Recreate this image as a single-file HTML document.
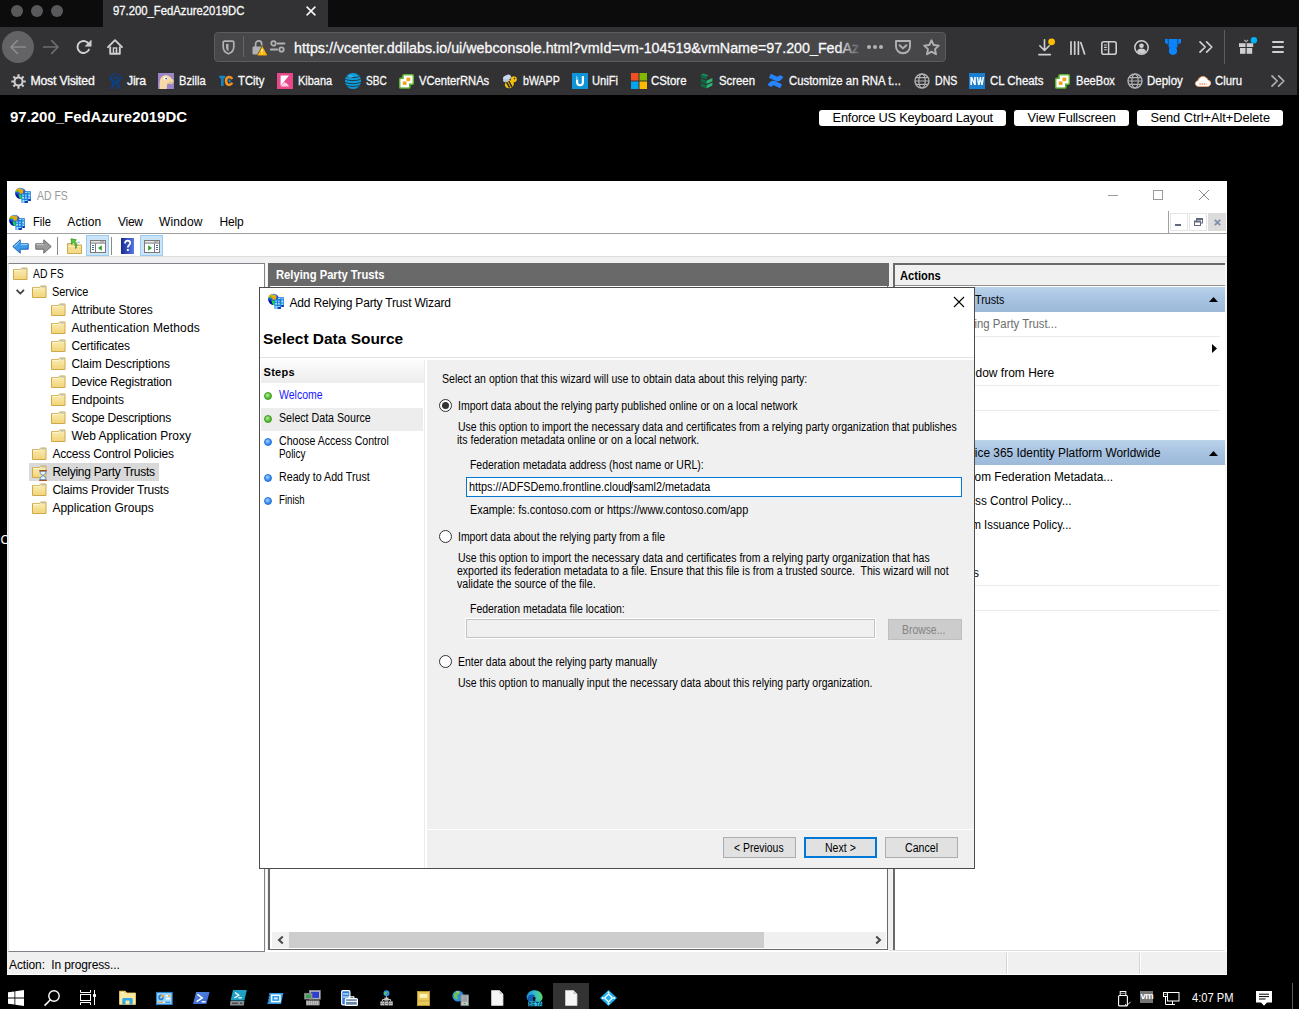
<!DOCTYPE html>
<html><head><meta charset="utf-8"><title>97.200_FedAzure2019DC</title>
<style>
*{box-sizing:border-box;margin:0;padding:0}
html,body{width:1299px;height:1009px;overflow:hidden;background:#000;font-family:"Liberation Sans",sans-serif;}
.a{position:absolute;white-space:pre}
svg.a{overflow:visible}
</style></head><body>
<div class="a" style="left:0px;top:0px;width:1299px;height:27px;background:#0c0c0d;"></div>
<div class="a" style="left:11px;top:5px;width:12px;height:12px;background:#59595b;border-radius:50%;"></div>
<div class="a" style="left:31px;top:5px;width:12px;height:12px;background:#59595b;border-radius:50%;"></div>
<div class="a" style="left:51px;top:5px;width:12px;height:12px;background:#59595b;border-radius:50%;"></div>
<div class="a" style="left:103px;top:0px;width:225px;height:27px;background:#323234;"></div>
<div class="a" style="top:4px;font-size:12px;line-height:14px;color:#f9f9fa;left:113.00px;transform:scaleX(0.9416);transform-origin:0 50%;-webkit-text-stroke:0.300px #f9f9fa;">97.200_FedAzure2019DC</div>
<svg class="a" style="left:304px;top:4px;" width="14" height="14" viewBox="0 0 14 14"><path d="M2.6 2.6l8.8 8.8M11.4 2.6l-8.8 8.8" stroke="#f9f9fa" stroke-width="1.5" fill="none"/></svg>
<div class="a" style="left:0px;top:27px;width:1299px;height:68px;background:#323234;"></div>
<div class="a" style="left:2px;top:31px;width:32px;height:32px;background:#636365;border-radius:50%;"></div>
<svg class="a" style="left:10px;top:39px;" width="16" height="16" viewBox="0 0 16 16"><path d="M15.5 8H1.2M7.3 1.6L1 8l6.3 6.4" stroke="#8c8c8e" stroke-width="1.6" fill="none" stroke-linecap="round" stroke-linejoin="round"/></svg>
<svg class="a" style="left:43px;top:39px;" width="16" height="16" viewBox="0 0 16 16"><path d="M0.5 8h14.3M8.7 1.6L15 8l-6.3 6.4" stroke="#6e6e70" stroke-width="1.6" fill="none" stroke-linecap="round" stroke-linejoin="round"/></svg>
<svg class="a" style="left:76px;top:39px;" width="16" height="16" viewBox="0 0 16 16"><path d="M12.940 5.460A6 6 0 1 0 12.940 10.540" stroke="#cfcfd2" stroke-width="1.900" fill="none" stroke-linecap="round"/><path d="M15.200 1.200V7.200H9.200Z" fill="#cfcfd2" stroke="#cfcfd2" stroke-width="0.600" stroke-linejoin="round"/></svg>
<svg class="a" style="left:107px;top:38.5px;" width="16" height="16" viewBox="0 0 16 16"><path d="M1 8.200L8 1.200l7 7" stroke="#cfcfd2" stroke-width="1.900" fill="none" stroke-linecap="round" stroke-linejoin="round"/><path d="M3.200 7.400v7.400h9.600V7.400" stroke="#cfcfd2" stroke-width="1.900" fill="none" stroke-linejoin="round"/><rect x="6.400" y="9" width="3.200" height="5.400" fill="none" stroke="#cfcfd2" stroke-width="1.400"/><rect x="8" y="11.400" width="0.900" height="0.900" fill="#cfcfd2"/></svg>
<div class="a" style="left:214px;top:32px;width:732px;height:30px;background:#474749;border:1px solid #5c5c5f;border-radius:4px;"></div>
<svg class="a" style="left:222.4px;top:39.8px;" width="13" height="15" viewBox="0 0 13 15"><path d="M2.400 1.200H10.600Q11.800 1.200 11.800 2.400V7C11.800 10.400 9.600 12.600 6.500 13.800 3.400 12.600 1.200 10.400 1.200 7V2.400Q1.200 1.200 2.400 1.200Z" stroke="#b1b1b3" stroke-width="1.700" fill="none" stroke-linejoin="round"/><path d="M6.500 3.600V11.200C5 10.400 4 9 4 7.200V4.200z" fill="#b1b1b3"/></svg>
<div class="a" style="left:243px;top:36px;width:1px;height:21px;background:#5f6670;"></div>
<svg class="a" style="left:251.5px;top:39.5px;" width="15" height="16" viewBox="0 0 15 16"><path d="M3.600 7.200V3.900a3.050 3.050 0 0 1 6.100 0V5.600" stroke="#b1b1b3" stroke-width="1.700" fill="none"/><rect x="0.500" y="6.500" width="9" height="8" rx="1.200" fill="#b1b1b3"/><path d="M10 6.400l4.600 8.600H5.400z" fill="#ffb400" stroke="#ffb400" stroke-width="0.900" stroke-linejoin="round"/><path d="M10 6.400l-4.900 9.200" stroke="#474749" stroke-width="0.800"/><rect x="9.450" y="9" width="1.100" height="3.200" fill="#fff"/><rect x="9.450" y="13" width="1.100" height="1.100" fill="#fff"/></svg>
<svg class="a" style="left:270px;top:40px;" width="15" height="13" viewBox="0 0 15 13"><circle cx="3.500" cy="3.400" r="2.200" stroke="#b1b1b3" stroke-width="1.800" fill="none"/><path d="M7.700 3.400h6.700" stroke="#b1b1b3" stroke-width="2" stroke-linecap="round"/><circle cx="11.500" cy="9.500" r="2.200" stroke="#b1b1b3" stroke-width="1.800" fill="none"/><path d="M0.800 9.500h6.300" stroke="#b1b1b3" stroke-width="2" stroke-linecap="round"/></svg>
<div class="a" style="top:39px;font-size:15.5px;line-height:17px;color:#f9f9fa;left:293.80px;transform:scaleX(0.9213);transform-origin:0 50%;-webkit-text-stroke:0.300px #f9f9fa;">https://vcenter.ddilabs.io/ui/webconsole.html?vmId=vm-104519&amp;vmName=97.200_FedAz</div>
<div class="a" style="left:838px;top:34px;width:28px;height:26px;background:linear-gradient(to right,rgba(71,71,73,0),rgba(71,71,73,1) 85%);"></div>
<div class="a" style="left:867px;top:45px;width:4px;height:4px;background:#b1b1b3;border-radius:50%;"></div>
<div class="a" style="left:873px;top:45px;width:4px;height:4px;background:#b1b1b3;border-radius:50%;"></div>
<div class="a" style="left:879px;top:45px;width:4px;height:4px;background:#b1b1b3;border-radius:50%;"></div>
<svg class="a" style="left:895px;top:40px;" width="16" height="14" viewBox="0 0 16 14"><path d="M1 1h14v5.500c0 3.800-3 6.700-7 6.700s-7-2.900-7-6.700z" stroke="#b1b1b3" stroke-width="1.900" fill="none" stroke-linejoin="round"/><path d="M4.600 5.200L8 8.400l3.400-3.200" stroke="#b1b1b3" stroke-width="1.900" fill="none" stroke-linecap="round" stroke-linejoin="round"/></svg>
<svg class="a" style="left:922.5px;top:38.5px;" width="17" height="17" viewBox="0 0 17 17"><path d="M8.500 1.300l2.200 4.700 5.100.6-3.800 3.500 1 5.100-4.500-2.600-4.500 2.600 1-5.100L1.200 6.600l5.100-.6z" stroke="#b1b1b3" stroke-width="1.900" fill="none" stroke-linejoin="round"/></svg>
<svg class="a" style="left:1038px;top:38.5px;" width="16" height="17" viewBox="0 0 16 17"><path d="M6.500 0.800v10.400M1.800 6.800l4.700 4.700 4.700-4.700" stroke="#cfcfd2" stroke-width="1.600" fill="none" stroke-linecap="round" stroke-linejoin="round"/><path d="M0.800 15.600h11.600" stroke="#cfcfd2" stroke-width="1.600" stroke-linecap="round"/><circle cx="13.600" cy="2.800" r="3.400" fill="#ffbf00"/></svg>
<svg class="a" style="left:1069.5px;top:40.5px;" width="16" height="14" viewBox="0 0 16 14"><path d="M1 0.800v12.400M4.700 0.800v12.400M8.400 0.800v12.400M10.800 1.600l3.800 11.400" stroke="#cfcfd2" stroke-width="1.700" fill="none" stroke-linecap="round"/></svg>
<svg class="a" style="left:1101px;top:40.5px;" width="16" height="14" viewBox="0 0 16 14"><rect x="0.800" y="0.800" width="14.400" height="12.400" rx="2" stroke="#cfcfd2" stroke-width="1.600" fill="none"/><path d="M7.600 1v12" stroke="#cfcfd2" stroke-width="1.500"/><path d="M3 4h2.800M3 6.400h2.800M3 8.800h2.800" stroke="#cfcfd2" stroke-width="1.100"/></svg>
<svg class="a" style="left:1133.5px;top:39.5px;" width="15" height="15" viewBox="0 0 15 15"><circle cx="7.500" cy="7.500" r="6.700" stroke="#cfcfd2" stroke-width="1.500" fill="none"/><circle cx="7.500" cy="5.800" r="2.300" fill="#cfcfd2"/><path d="M3 11.200c.8-1.900 2.600-2.600 4.500-2.600s3.700.7 4.500 2.600c-1.100 1.500-2.700 2.300-4.500 2.300S4.100 12.700 3 11.200z" fill="#cfcfd2"/></svg>
<svg class="a" style="left:1165px;top:39px;" width="17" height="16" viewBox="0 0 17 16"><path d="M0 0h2.800v5.400L0 3.800z" fill="#0a84ff"/><path d="M13.200 0H16v3.800l-2.800 1.600z" fill="#0a84ff"/><rect x="3.600" y="0" width="8.800" height="8.600" fill="#0a84ff"/><circle cx="8" cy="11.800" r="4.100" fill="#0a84ff"/></svg>
<svg class="a" style="left:1198.5px;top:41px;" width="14" height="12" viewBox="0 0 14 12"><path d="M1 0.800L6.200 6 1 11.200M7.600 0.800L12.800 6l-5.200 5.200" stroke="#cfcfd2" stroke-width="1.700" fill="none" stroke-linecap="round" stroke-linejoin="round"/></svg>
<div class="a" style="left:1224px;top:30px;width:1px;height:34px;background:#5c5c5f;"></div>
<svg class="a" style="left:1239px;top:39px;" width="16" height="16" viewBox="0 0 16 16"><rect x="0" y="4.200" width="6.500" height="3.800" fill="#cfcfd2"/><rect x="7.700" y="4.200" width="6.500" height="3.800" fill="#cfcfd2"/><rect x="1" y="9" width="5.500" height="5.800" fill="#cfcfd2"/><rect x="7.700" y="9" width="5.500" height="5.800" fill="#cfcfd2"/><path d="M7.100 3.600L5 1.800c-.4-.8.600-1.400 1.200-.8l.9.900.9-.9c.6-.6 1.600 0 1.200.8z" fill="#a9a9ab"/><circle cx="14.900" cy="1.300" r="3.200" fill="#00b3f4"/></svg>
<div class="a" style="left:1271.8px;top:41px;width:12.4px;height:2px;background:#cfcfd2;border-radius:1px;"></div>
<div class="a" style="left:1271.8px;top:46px;width:12.4px;height:2px;background:#cfcfd2;border-radius:1px;"></div>
<div class="a" style="left:1271.8px;top:51px;width:12.4px;height:2px;background:#cfcfd2;border-radius:1px;"></div>
<div class="a" style="left:1296.5px;top:27px;width:3px;height:68px;background:#0c0c0d;"></div>
<div class="a" style="top:74px;font-size:12.3px;line-height:14px;color:#f9f9fa;letter-spacing:-0.230px;left:30.50px;-webkit-text-stroke:0.300px #f9f9fa;">Most Visited</div>
<div class="a" style="top:74px;font-size:12.3px;line-height:14px;color:#f9f9fa;letter-spacing:-0.257px;left:127.00px;-webkit-text-stroke:0.300px #f9f9fa;">Jira</div>
<div class="a" style="top:74px;font-size:12.3px;line-height:14px;color:#f9f9fa;left:178.60px;transform:scaleX(0.9085);transform-origin:0 50%;-webkit-text-stroke:0.300px #f9f9fa;">Bzilla</div>
<div class="a" style="top:74px;font-size:12.3px;line-height:14px;color:#f9f9fa;left:238.30px;transform:scaleX(0.9198);transform-origin:0 50%;-webkit-text-stroke:0.300px #f9f9fa;">TCity</div>
<div class="a" style="top:74px;font-size:12.3px;line-height:14px;color:#f9f9fa;left:297.80px;transform:scaleX(0.8930);transform-origin:0 50%;-webkit-text-stroke:0.300px #f9f9fa;">Kibana</div>
<div class="a" style="top:74px;font-size:12.3px;line-height:14px;color:#f9f9fa;left:365.60px;transform:scaleX(0.8222);transform-origin:0 50%;-webkit-text-stroke:0.300px #f9f9fa;">SBC</div>
<div class="a" style="top:74px;font-size:12.3px;line-height:14px;color:#f9f9fa;left:419.40px;transform:scaleX(0.9089);transform-origin:0 50%;-webkit-text-stroke:0.300px #f9f9fa;">VCenterRNAs</div>
<div class="a" style="top:74px;font-size:12.3px;line-height:14px;color:#f9f9fa;left:522.60px;transform:scaleX(0.8637);transform-origin:0 50%;-webkit-text-stroke:0.300px #f9f9fa;">bWAPP</div>
<div class="a" style="top:74px;font-size:12.3px;line-height:14px;color:#f9f9fa;left:592.40px;transform:scaleX(0.9058);transform-origin:0 50%;-webkit-text-stroke:0.300px #f9f9fa;">UniFi</div>
<div class="a" style="top:74px;font-size:12.3px;line-height:14px;color:#f9f9fa;left:650.70px;transform:scaleX(0.9273);transform-origin:0 50%;-webkit-text-stroke:0.300px #f9f9fa;">CStore</div>
<div class="a" style="top:74px;font-size:12.3px;line-height:14px;color:#f9f9fa;left:718.80px;transform:scaleX(0.9238);transform-origin:0 50%;-webkit-text-stroke:0.300px #f9f9fa;">Screen</div>
<div class="a" style="top:74px;font-size:12.3px;line-height:14px;color:#f9f9fa;left:788.60px;transform:scaleX(0.9242);transform-origin:0 50%;-webkit-text-stroke:0.300px #f9f9fa;">Customize an RNA t...</div>
<div class="a" style="top:74px;font-size:12.3px;line-height:14px;color:#f9f9fa;left:934.70px;transform:scaleX(0.8587);transform-origin:0 50%;-webkit-text-stroke:0.300px #f9f9fa;">DNS</div>
<div class="a" style="top:74px;font-size:12.3px;line-height:14px;color:#f9f9fa;left:989.50px;transform:scaleX(0.9279);transform-origin:0 50%;-webkit-text-stroke:0.300px #f9f9fa;">CL Cheats</div>
<div class="a" style="top:74px;font-size:12.3px;line-height:14px;color:#f9f9fa;left:1075.60px;transform:scaleX(0.9030);transform-origin:0 50%;-webkit-text-stroke:0.300px #f9f9fa;">BeeBox</div>
<div class="a" style="top:74px;font-size:12.3px;line-height:14px;color:#f9f9fa;left:1146.80px;transform:scaleX(0.9352);transform-origin:0 50%;-webkit-text-stroke:0.300px #f9f9fa;">Deploy</div>
<div class="a" style="top:74px;font-size:12.3px;line-height:14px;color:#f9f9fa;left:1215.20px;transform:scaleX(0.9255);transform-origin:0 50%;-webkit-text-stroke:0.300px #f9f9fa;">Cluru</div>
<svg class="a" style="left:10.5px;top:73.5px;" width="15" height="15" viewBox="0 0 15 15"><circle cx="7.500" cy="7.500" r="4" stroke="#cfcfd2" stroke-width="2" fill="none"/><g stroke="#cfcfd2" stroke-width="2.100" stroke-linecap="butt"><path d="M7.500 0.300v2.600M7.500 12.100v2.600M0.300 7.500h2.600M12.100 7.500h2.600M2.400 2.400l1.800 1.800M10.800 10.800l1.800 1.800M2.400 12.600l1.800-1.800M10.800 4.200l1.800-1.800"/></g></svg>
<svg class="a" style="left:108.5px;top:73px;" width="13" height="16" viewBox="0 0 13 16"><g stroke="#0d3f82" stroke-width="2.700" fill="none" stroke-linecap="round"><path d="M1.600 4.200C3 8 4.600 9.400 6.500 9.400S10 8 11.400 4.200"/><path d="M2.800 14.800C3.600 11.800 5 10 6.500 9 8 10 9.400 11.800 10.200 14.800"/></g><circle cx="6.500" cy="4.600" r="1.700" fill="#0d3f82"/><circle cx="3.600" cy="1.600" r="1.100" fill="#0d3f82"/><circle cx="9.400" cy="1.600" r="1.100" fill="#0d3f82"/><circle cx="6.500" cy="0.900" r="0.900" fill="#0d3f82"/></svg>
<svg class="a" style="left:158px;top:73px;" width="16" height="16" viewBox="0 0 16 16"><rect width="16" height="16" fill="#9a86c6"/><path d="M1.600 16V11c0-3 .6-5.400 2-7C5 2.400 7.400 1.800 9.600 2.400c2 .6 3.400 2 4.400 3.600 1 .4 1.600 1.200 1.600 2.400 0 1.600-1.200 2.600-3 2.600-1.200 0-2.200-.2-3-.8-.6 1.600-1 3.600-.8 5.800z" fill="#f6d9a6"/><circle cx="7.600" cy="5.400" r="1.800" fill="#fff"/><circle cx="8.200" cy="5.600" r="0.900" fill="#4a4a6a"/><path d="M11 9.600c1.400.5 2.800.3 3.800-.5" stroke="#b9925a" stroke-width="0.600" fill="none"/></svg>
<svg class="a" style="left:219px;top:73.5px;" width="15" height="15" viewBox="0 0 15 15"><path d="M0.300 1.800h6v2.500H4.600v7.600H2V4.300H0.300z" fill="#1287c9"/><path d="M14.200 4.600c-.9-1.800-2.300-2.800-4-2.800-2.600 0-4.400 2.100-4.400 5.100s1.800 5.100 4.400 5.100c1.700 0 3.100-1 4-2.800l-2.100-1c-.4.900-1 1.400-1.800 1.400-1.100 0-1.900-1.100-1.900-2.700s.8-2.700 1.900-2.700c.8 0 1.400.5 1.800 1.400z" fill="#f7941d"/><path d="M11.600 5.400a1.600 1.600 0 1 0 0 3z" fill="#1287c9"/></svg>
<svg class="a" style="left:277px;top:73px;" width="16" height="16" viewBox="0 0 16 16"><rect width="16" height="16" fill="#e8478b"/><path d="M3.600 2.400h8.400L3.600 13z" fill="#fff"/><path d="M7.200 9.200c2.200.4 4 2 4.800 4.400H3.800z" fill="#fbd0e1"/></svg>
<svg class="a" style="left:345px;top:73px;" width="16" height="16" viewBox="0 0 16 16"><circle cx="8" cy="8" r="8" fill="#0a9edc"/><path d="M1.600 3.600c4 1.400 8.800 1.400 12.800 0M0.400 6.400c4.800 1.600 10.400 1.600 15.200 0M0.200 9.400c4.800 1.800 10.800 1.800 15.600 0M1.400 12.300c3.800 1.600 9.400 1.600 13.200 0" stroke="#2a2f3a" stroke-width="0.900" fill="none"/><ellipse cx="5.400" cy="3.600" rx="2.600" ry="1.400" fill="#4fc3f0" opacity="0.600"/></svg>
<svg class="a" style="left:398.8px;top:73.5px;" width="15" height="15" viewBox="0 0 15 15"><rect x="4" y="0.800" width="10.200" height="9.400" rx="1" fill="#fff" stroke="#5eb531" stroke-width="1.700"/><rect x="0.800" y="4.400" width="10" height="9.600" rx="1" fill="#fff" stroke="#5eb531" stroke-width="1.700"/><rect x="4.850" y="1.650" width="8.500" height="7.700" fill="#fff"/><rect x="1.650" y="5.250" width="8.300" height="7.900" fill="#fff"/><rect x="7.500" y="3.600" width="3.800" height="3.500" fill="#f7a11a"/><rect x="3.800" y="7.400" width="3.700" height="3.500" fill="#f7a11a"/></svg>
<svg class="a" style="left:502px;top:73px;" width="16" height="16" viewBox="0 0 16 16"><ellipse cx="5" cy="4.600" rx="4.200" ry="2.600" fill="#c9d7ee" transform="rotate(-20 5 4.600)"/><ellipse cx="4.400" cy="7.600" rx="3.400" ry="1.800" fill="#b7c8e6"/><ellipse cx="7.400" cy="11.200" rx="4.600" ry="3.800" fill="#f4c20d" transform="rotate(-25 7.400 11.200)"/><path d="M4.600 9.200l3 5.400M6.800 8l3 5.800" stroke="#2a2a2a" stroke-width="1.500"/><circle cx="11.800" cy="6.200" r="3" fill="#f4c20d"/><circle cx="12.600" cy="5.600" r="0.800" fill="#2a2a2a"/><path d="M11 3.400L10 1M13 3.400L14.400 1.400" stroke="#2a2a2a" stroke-width="0.700"/></svg>
<svg class="a" style="left:572px;top:73px;" width="16" height="16" viewBox="0 0 16 16"><rect width="16" height="16" fill="#0d95d8"/><path d="M4 6.400v2.800c0 2.400 1.600 4 4 4s4-1.600 4-4V3h-2.200v6.200c0 1.200-.7 2-1.800 2s-1.800-.8-1.800-2V6.400z" fill="#fff"/><rect x="4" y="3.200" width="1" height="1" fill="#bfe6f8"/><rect x="5.200" y="4.400" width="1" height="1" fill="#bfe6f8"/><rect x="4" y="4.800" width="1" height="1" fill="#bfe6f8"/></svg>
<svg class="a" style="left:631px;top:73px;" width="16" height="16" viewBox="0 0 16 16"><rect width="7.500" height="7.500" fill="#f25022"/><rect x="8.500" width="7.500" height="7.500" fill="#7fba00"/><rect y="8.500" width="7.500" height="7.500" fill="#00a4ef"/><rect x="8.500" y="8.500" width="7.500" height="7.500" fill="#ffb900"/></svg>
<svg class="a" style="left:700px;top:73px;" width="14" height="16" viewBox="0 0 14 16"><path d="M1 1.400l5.600 2v3.200L1 4.600zM1 5.800l5.600 2V11L1 9zM1 10.200l5.600 2v3.200L1 13.400z" fill="#0f6b45"/><path d="M6.600 7.800L12.400 5v3.200L6.600 11zM6.600 12.200l5.800-2.800v3.200l-5.800 2.800z" fill="#2bb673"/><path d="M1 1.400L3.400 0.400 9 2.400 6.600 3.400z" fill="#1a8f5c"/></svg>
<svg class="a" style="left:767px;top:73px;" width="17" height="16" viewBox="0 0 17 16"><path d="M0.600 12c2.600-4.400 5.400-5 9.200-3.200l5.200 2.500-1.900 4-5.200-2.500c-1.700-.8-2.600-.5-3.700 1.300z" fill="#2684ff"/><path d="M16.400 4c-2.600 4.400-5.400 5-9.200 3.200L2 4.700l1.900-4 5.200 2.500c1.700.8 2.600.5 3.700-1.300z" fill="#2684ff"/></svg>
<svg class="a" style="left:914px;top:73px;" width="16" height="16" viewBox="0 0 16 16"><circle cx="8" cy="8" r="7" stroke="#b1b1b3" stroke-width="1.400" fill="none"/><ellipse cx="8" cy="8" rx="3.200" ry="7" stroke="#b1b1b3" stroke-width="1.200" fill="none"/><path d="M1 8h14M2 4.600h12M2 11.400h12" stroke="#b1b1b3" stroke-width="1.200" fill="none"/></svg>
<svg class="a" style="left:969px;top:73px;" width="16" height="16" viewBox="0 0 16 16"><rect width="16" height="16" fill="#1b7fd1"/><path d="M1.400 12V4h1.800l2 4.600V4h1.600v8H5.200L3 7.200V12zM7.600 4h1.500l.8 5 .8-5h1.300l.8 5 .8-5h1.500l-1.400 8h-1.600l-.7-4.400-.7 4.400H9z" fill="#fff"/></svg>
<svg class="a" style="left:1055.2px;top:73.5px;" width="15" height="15" viewBox="0 0 15 15"><rect x="4" y="0.800" width="10.200" height="9.400" rx="1" fill="#fff" stroke="#5eb531" stroke-width="1.700"/><rect x="0.800" y="4.400" width="10" height="9.600" rx="1" fill="#fff" stroke="#5eb531" stroke-width="1.700"/><rect x="4.850" y="1.650" width="8.500" height="7.700" fill="#fff"/><rect x="1.650" y="5.250" width="8.300" height="7.900" fill="#fff"/><rect x="7.500" y="3.600" width="3.800" height="3.500" fill="#f7a11a"/><rect x="3.800" y="7.400" width="3.700" height="3.500" fill="#f7a11a"/></svg>
<svg class="a" style="left:1127px;top:73px;" width="16" height="16" viewBox="0 0 16 16"><circle cx="8" cy="8" r="7" stroke="#b1b1b3" stroke-width="1.400" fill="none"/><ellipse cx="8" cy="8" rx="3.200" ry="7" stroke="#b1b1b3" stroke-width="1.200" fill="none"/><path d="M1 8h14M2 4.600h12M2 11.400h12" stroke="#b1b1b3" stroke-width="1.200" fill="none"/></svg>
<svg class="a" style="left:1195px;top:76px;" width="16" height="11" viewBox="0 0 16 11"><path d="M3.600 10.400C1.600 10.400.4 9.200.4 7.600c0-1.500 1-2.600 2.500-2.800C3.400 2.400 5.400.6 8 .6c2.300 0 4.200 1.400 4.800 3.500 1.700.2 2.900 1.500 2.900 3.100 0 1.800-1.400 3.200-3.300 3.200z" fill="#fff" stroke="#f6a97c" stroke-width="0.900"/><path d="M4.400 8h7.200" stroke="#f08a5d" stroke-width="1.400" stroke-dasharray="1.400 0.800"/></svg>
<svg class="a" style="left:1270.5px;top:75px;" width="14" height="12" viewBox="0 0 14 12"><path d="M1 0.800L6.200 6 1 11.200M7.600 0.800L12.800 6l-5.200 5.200" stroke="#b1b1b3" stroke-width="1.700" fill="none" stroke-linecap="round" stroke-linejoin="round"/></svg>
<div class="a" style="top:108px;font-size:15px;line-height:17px;color:#fff;font-weight:700;letter-spacing:-0.029px;left:10.00px;">97.200_FedAzure2019DC</div>
<div class="a" style="left:819px;top:110px;width:187.29999999999995px;height:16px;background:#fff;border-radius:3px;"></div>
<div class="a" style="top:110px;font-size:12.8px;line-height:15px;color:#000;letter-spacing:-0.210px;left:832.60px;">Enforce US Keyboard Layout</div>
<div class="a" style="left:1014px;top:110px;width:115px;height:16px;background:#fff;border-radius:3px;"></div>
<div class="a" style="top:110px;font-size:12.8px;line-height:15px;color:#000;letter-spacing:-0.133px;left:1027.60px;">View Fullscreen</div>
<div class="a" style="left:1137px;top:110px;width:146px;height:16px;background:#fff;border-radius:3px;"></div>
<div class="a" style="top:110px;font-size:12.8px;line-height:15px;color:#000;letter-spacing:-0.031px;left:1150.40px;">Send Ctrl+Alt+Delete</div>
<div class="a" style="left:0;top:530px;width:7px;height:20px;overflow:hidden"><div class="a" style="left:0.500px;top:3px;font-size:12.500px;line-height:14px;color:#fff">C</div></div>
<div class="a" style="left:7px;top:181px;width:1220px;height:794px;background:#fff;"></div>
<svg class="a" style="left:14.6px;top:186.8px;" width="16.3" height="16.3" viewBox="0 0 17 17"><circle cx="5.800" cy="6.600" r="5.800" fill="#1a4fd0"/><path d="M2.200 2.400C3.600 1 5.600 0.600 7.600 1.200L9 3.600 6 6.400 2 5.200z" fill="#4aa8f0"/><path d="M0.300 5.400C0.600 3.400 2 1.800 3.800 1.400L7.200 2.800 8.600 1.800V7H4.200L5.600 5.600 2.400 4.400z" fill="#f7a800"/><path d="M2 3.600c.8-.4 1.800 0 2 .8.200.8-.6 1.200-1.400 1.200S1.600 4.400 2 3.600zM3.600 8.200c1.400-.6 3.400-.2 4 1.200.6 1.600-.2 3-1.600 3.400C4.800 12 3.600 10.200 3.600 8.200z" fill="#18d840"/><path d="M0.600 7.800C1.400 10 2.800 11.800 5 12.600L4 9.400 2.200 7.200z" fill="#0a10a8"/><rect x="9.500" y="4.400" width="7" height="10" fill="#1a78d8"/><rect x="6.700" y="6.800" width="6.900" height="9.700" fill="#1a80e0"/><g fill="#bfeeff"><rect x="10.600" y="5.400" width="2.400" height="0.900"/><rect x="13.800" y="5.600" width="1.800" height="1"/><rect x="14" y="7.800" width="1.600" height="2.200"/><rect x="13.800" y="11" width="1.800" height="1.400"/><rect x="7.600" y="8" width="1.800" height="1"/><rect x="10.400" y="8" width="1.800" height="1"/><rect x="7.600" y="10.200" width="1.600" height="2"/><rect x="10.600" y="10.200" width="1.400" height="2"/><rect x="7.800" y="13.400" width="1.400" height="3"/><rect x="9.800" y="13.800" width="2.800" height="1"/></g><rect x="10.600" y="14.800" width="2.600" height="1.700" fill="#0020a0"/><rect x="14.200" y="12.800" width="2.200" height="1.600" fill="#0020a0"/></svg>
<div class="a" style="top:189px;font-size:12px;line-height:14px;color:#999;left:36.60px;transform:scaleX(0.8686);transform-origin:0 50%;">AD FS</div>
<div class="a" style="left:1108px;top:195px;width:10px;height:1px;background:#9a9a9a;"></div>
<div class="a" style="left:1153px;top:190px;width:10px;height:10px;border:1px solid #9a9a9a;"></div>
<svg class="a" style="left:1198.5px;top:190px;" width="10" height="10" viewBox="0 0 10 10"><path d="M0 0l10 10M10 0L0 10" stroke="#8a8a8a" stroke-width="1" fill="none"/></svg>
<svg class="a" style="left:8.9px;top:213.6px;" width="16.3" height="16.3" viewBox="0 0 17 17"><circle cx="5.800" cy="6.600" r="5.800" fill="#1a4fd0"/><path d="M2.200 2.400C3.600 1 5.600 0.600 7.600 1.200L9 3.600 6 6.400 2 5.200z" fill="#4aa8f0"/><path d="M0.300 5.400C0.600 3.400 2 1.800 3.800 1.400L7.200 2.800 8.600 1.800V7H4.200L5.600 5.600 2.400 4.400z" fill="#f7a800"/><path d="M2 3.600c.8-.4 1.800 0 2 .8.200.8-.6 1.200-1.400 1.200S1.600 4.400 2 3.600zM3.600 8.200c1.400-.6 3.400-.2 4 1.200.6 1.600-.2 3-1.600 3.400C4.800 12 3.600 10.200 3.600 8.200z" fill="#18d840"/><path d="M0.600 7.800C1.400 10 2.800 11.800 5 12.600L4 9.400 2.200 7.200z" fill="#0a10a8"/><rect x="9.500" y="4.400" width="7" height="10" fill="#1a78d8"/><rect x="6.700" y="6.800" width="6.900" height="9.700" fill="#1a80e0"/><g fill="#bfeeff"><rect x="10.600" y="5.400" width="2.400" height="0.900"/><rect x="13.800" y="5.600" width="1.800" height="1"/><rect x="14" y="7.800" width="1.600" height="2.200"/><rect x="13.800" y="11" width="1.800" height="1.400"/><rect x="7.600" y="8" width="1.800" height="1"/><rect x="10.400" y="8" width="1.800" height="1"/><rect x="7.600" y="10.200" width="1.600" height="2"/><rect x="10.600" y="10.200" width="1.400" height="2"/><rect x="7.800" y="13.400" width="1.400" height="3"/><rect x="9.800" y="13.800" width="2.800" height="1"/></g><rect x="10.600" y="14.800" width="2.600" height="1.700" fill="#0020a0"/><rect x="14.200" y="12.800" width="2.200" height="1.600" fill="#0020a0"/></svg>
<div class="a" style="top:215px;font-size:12px;line-height:14px;color:#000;left:33.40px;transform:scaleX(0.9254);transform-origin:0 50%;">File</div>
<div class="a" style="top:215px;font-size:12px;line-height:14px;color:#000;letter-spacing:0.107px;left:67.30px;">Action</div>
<div class="a" style="top:215px;font-size:12px;line-height:14px;color:#000;letter-spacing:-0.299px;left:118.10px;">View</div>
<div class="a" style="top:215px;font-size:12px;line-height:14px;color:#000;letter-spacing:0.152px;left:159.00px;">Window</div>
<div class="a" style="top:215px;font-size:12px;line-height:14px;color:#000;letter-spacing:-0.122px;left:219.40px;">Help</div>
<div class="a" style="left:7px;top:233px;width:1162px;height:1px;background:#a0a0a0;"></div>
<div class="a" style="left:1168px;top:211px;width:1px;height:23px;background:#a0a0a0;"></div>
<div class="a" style="left:1169px;top:211px;width:58px;height:1px;background:#fff;"></div>
<div class="a" style="left:1169px;top:233px;width:58px;height:1px;background:#a0a0a0;"></div>
<div class="a" style="left:1170px;top:213px;width:18px;height:18px;background:#fff;border:1px solid #e5e5e5;"></div>
<div class="a" style="left:1175px;top:224px;width:6px;height:2px;background:#5f6b7c;"></div>
<div class="a" style="left:1189px;top:213px;width:18px;height:18px;background:#fff;border:1px solid #e5e5e5;"></div>
<svg class="a" style="left:1194px;top:218px;" width="9" height="8" viewBox="0 0 9 8"><rect x="2.500" y="0.500" width="6" height="4.500" fill="none" stroke="#5f6b7c"/><rect x="2.500" y="0.500" width="6" height="1.500" fill="#5f6b7c"/><rect x="0.500" y="3" width="6" height="4.500" fill="#fff" stroke="#5f6b7c"/><rect x="0.500" y="3" width="6" height="1.500" fill="#5f6b7c"/></svg>
<div class="a" style="left:1208px;top:213px;width:18px;height:18px;background:#dcdcdc;"></div>
<svg class="a" style="left:1213.5px;top:219px;" width="7" height="7" viewBox="0 0 7 7"><path d="M0.800 0.800l5.400 5.400M6.200 0.800L0.800 6.200" stroke="#7f90a8" stroke-width="1.900" fill="none"/></svg>
<div class="a" style="left:7px;top:234px;width:1220px;height:23px;background:#fff;"></div>
<svg class="a" style="left:11.5px;top:238.5px;" width="17" height="15" viewBox="0 0 17 15"><path d="M8.200 0.800L0.800 7.500l7.400 6.700V10.200h8V4.800h-8z" fill="#3b9bea" stroke="#1b62b3" stroke-width="1" stroke-linejoin="round"/><path d="M8 2.400L2.400 7.500M8.600 5.600h7" stroke="#9fd4ff" stroke-width="1" fill="none"/></svg>
<svg class="a" style="left:34.5px;top:238.5px;" width="17" height="15" viewBox="0 0 17 15"><path d="M8.800 0.800l7.400 6.700-7.400 6.700V10.200h-8V4.800h8z" fill="#9a9a9a" stroke="#6a6a6a" stroke-width="1" stroke-linejoin="round"/><path d="M1.400 5.600h7.400" stroke="#c8c8c8" stroke-width="1"/></svg>
<div class="a" style="left:57px;top:237px;width:1px;height:18px;background:#8a8a8a;"></div>
<svg class="a" style="left:66.5px;top:238px;" width="16" height="16" viewBox="0 0 16 16"><path d="M0.500 5.500h4.500l1.500 1.500h8v8.500h-14z" fill="#f5dc8c" stroke="#c9a850" stroke-width="1"/><path d="M1.200 8.500h12.600" stroke="#fdf1c0" stroke-width="1"/><path d="M10.500 4.200h2.500" stroke="#7ab0e8" stroke-width="1"/><path d="M8.600 10.600C8.800 7.400 8 5.600 6.200 4.600L4.600 6.400 4 0.800l5.400 1L7.800 3.400C10 4.600 10.800 7.200 8.600 10.600z" fill="#5ac83c" stroke="#2f8a1c" stroke-width="0.700" stroke-linejoin="round"/></svg>
<div class="a" style="left:86px;top:235px;width:23px;height:21px;background:#cce4f7;border:1px solid #99ccf0;"></div>
<svg class="a" style="left:89.5px;top:239.5px;" width="16" height="13" viewBox="0 0 16 13"><rect x="0.500" y="0.500" width="15" height="12" fill="#fff" stroke="#7a7a7a"/><rect x="0.500" y="0.500" width="15" height="2.600" fill="#e6e6e6" stroke="#7a7a7a"/><path d="M10.500 1.800h1M12.500 1.800h1" stroke="#555" stroke-width="1"/><path d="M5.500 3.500v9" stroke="#7a7a7a"/><path d="M2 5.500h2M2 7.500h2M2 9.500h2" stroke="#3a6ea5"/><path d="M11.800 5.200v5.600L8 8z" fill="#2e9c2e"/></svg>
<div class="a" style="left:111px;top:237px;width:1px;height:18px;background:#8a8a8a;"></div>
<svg class="a" style="left:121px;top:238px;" width="13" height="16" viewBox="0 0 13 16"><defs><linearGradient id="hg" x1="0" y1="0" x2="1" y2="0"><stop offset="0" stop-color="#1c2c8c"/><stop offset="0.600" stop-color="#3a55c8"/><stop offset="1" stop-color="#5b7be0"/></linearGradient></defs><rect x="0" y="0" width="13" height="16" fill="url(#hg)"/><path d="M4 5.400c0-1.800 1-2.800 2.600-2.800s2.600 1 2.600 2.400c0 2-2.400 2.200-2.400 4.400" stroke="#fff" stroke-width="1.700" fill="none"/><rect x="5.900" y="11" width="1.900" height="1.900" fill="#fff"/></svg>
<div class="a" style="left:140px;top:235px;width:23px;height:21px;background:#cce4f7;border:1px solid #99ccf0;"></div>
<svg class="a" style="left:143.5px;top:239.5px;" width="16" height="13" viewBox="0 0 16 13"><rect x="0.500" y="0.500" width="15" height="12" fill="#fff" stroke="#7a7a7a"/><rect x="0.500" y="0.500" width="15" height="2.600" fill="#e6e6e6" stroke="#7a7a7a"/><path d="M10.500 1.800h1M12.500 1.800h1" stroke="#555" stroke-width="1"/><path d="M10.500 3.500v9" stroke="#7a7a7a"/><path d="M12 5.500h2M12 7.500h2M12 9.500h2" stroke="#3a6ea5"/><path d="M4.200 5.200v5.600L8 8z" fill="#2e9c2e"/></svg>
<div class="a" style="left:7px;top:256px;width:1220px;height:1px;background:#dcdcdc;"></div>
<div class="a" style="left:7px;top:257px;width:1220px;height:718px;background:#f0f0f0;"></div>
<svg class="a" width="0" height="0" style="left:0;top:0"><defs><linearGradient id="fg" x1="0" y1="0" x2="0" y2="1"><stop offset="0" stop-color="#fbeeb8"/><stop offset="1" stop-color="#f2d478"/></linearGradient></defs></svg>
<div class="a" style="left:8px;top:263px;width:257px;height:689px;background:#fff;border:1px solid #7f8288;border-left-color:#e4e4e4;"></div>
<svg class="a" style="left:12.8px;top:267.0px;" width="15" height="13" viewBox="0 0 15 13"><path d="M0.500 2.500v10h13.500v-11.500h-5.400l-1.200 1.500z" fill="url(#fg)" stroke="#cfa84c" stroke-width="1" stroke-linejoin="round"/><path d="M1.200 3.300h6.200" stroke="#fff8dc" stroke-width="1"/><path d="M9.800 2h2.800" stroke="#8fb8e8" stroke-width="1"/></svg>
<div class="a" style="top:267px;font-size:12px;line-height:14px;color:#000;left:33.40px;transform:scaleX(0.8658);transform-origin:0 50%;">AD FS</div>
<svg class="a" style="left:31.8px;top:285.0px;" width="15" height="13" viewBox="0 0 15 13"><path d="M0.500 2.500v10h13.500v-11.500h-5.400l-1.200 1.500z" fill="url(#fg)" stroke="#cfa84c" stroke-width="1" stroke-linejoin="round"/><path d="M1.200 3.300h6.200" stroke="#fff8dc" stroke-width="1"/><path d="M9.800 2h2.800" stroke="#8fb8e8" stroke-width="1"/></svg>
<div class="a" style="top:285px;font-size:12px;line-height:14px;color:#000;left:52.40px;transform:scaleX(0.9096);transform-origin:0 50%;">Service</div>
<svg class="a" style="left:15.5px;top:289.0px;" width="9" height="6" viewBox="0 0 9 6"><path d="M0.600 0.800L4.300 4.600 8 0.800" stroke="#3c3c3c" stroke-width="1.700" fill="none"/></svg>
<svg class="a" style="left:50.8px;top:303.0px;" width="15" height="13" viewBox="0 0 15 13"><path d="M0.500 2.500v10h13.500v-11.500h-5.400l-1.200 1.500z" fill="url(#fg)" stroke="#cfa84c" stroke-width="1" stroke-linejoin="round"/><path d="M1.200 3.300h6.200" stroke="#fff8dc" stroke-width="1"/><path d="M9.800 2h2.800" stroke="#8fb8e8" stroke-width="1"/></svg>
<div class="a" style="top:303px;font-size:12px;line-height:14px;color:#000;letter-spacing:-0.089px;left:71.40px;">Attribute Stores</div>
<svg class="a" style="left:50.8px;top:321.0px;" width="15" height="13" viewBox="0 0 15 13"><path d="M0.500 2.500v10h13.500v-11.500h-5.400l-1.200 1.500z" fill="url(#fg)" stroke="#cfa84c" stroke-width="1" stroke-linejoin="round"/><path d="M1.200 3.300h6.200" stroke="#fff8dc" stroke-width="1"/><path d="M9.800 2h2.800" stroke="#8fb8e8" stroke-width="1"/></svg>
<div class="a" style="top:321px;font-size:12px;line-height:14px;color:#000;letter-spacing:0.140px;left:71.40px;">Authentication Methods</div>
<svg class="a" style="left:50.8px;top:339.0px;" width="15" height="13" viewBox="0 0 15 13"><path d="M0.500 2.500v10h13.500v-11.500h-5.400l-1.200 1.500z" fill="url(#fg)" stroke="#cfa84c" stroke-width="1" stroke-linejoin="round"/><path d="M1.200 3.300h6.200" stroke="#fff8dc" stroke-width="1"/><path d="M9.800 2h2.800" stroke="#8fb8e8" stroke-width="1"/></svg>
<div class="a" style="top:339px;font-size:12px;line-height:14px;color:#000;letter-spacing:-0.128px;left:71.40px;">Certificates</div>
<svg class="a" style="left:50.8px;top:357.0px;" width="15" height="13" viewBox="0 0 15 13"><path d="M0.500 2.500v10h13.500v-11.500h-5.400l-1.200 1.500z" fill="url(#fg)" stroke="#cfa84c" stroke-width="1" stroke-linejoin="round"/><path d="M1.200 3.300h6.200" stroke="#fff8dc" stroke-width="1"/><path d="M9.800 2h2.800" stroke="#8fb8e8" stroke-width="1"/></svg>
<div class="a" style="top:357px;font-size:12px;line-height:14px;color:#000;letter-spacing:-0.085px;left:71.40px;">Claim Descriptions</div>
<svg class="a" style="left:50.8px;top:375.0px;" width="15" height="13" viewBox="0 0 15 13"><path d="M0.500 2.500v10h13.500v-11.500h-5.400l-1.200 1.500z" fill="url(#fg)" stroke="#cfa84c" stroke-width="1" stroke-linejoin="round"/><path d="M1.200 3.300h6.200" stroke="#fff8dc" stroke-width="1"/><path d="M9.800 2h2.800" stroke="#8fb8e8" stroke-width="1"/></svg>
<div class="a" style="top:375px;font-size:12px;line-height:14px;color:#000;letter-spacing:-0.197px;left:71.40px;">Device Registration</div>
<svg class="a" style="left:50.8px;top:393.0px;" width="15" height="13" viewBox="0 0 15 13"><path d="M0.500 2.500v10h13.500v-11.500h-5.400l-1.200 1.500z" fill="url(#fg)" stroke="#cfa84c" stroke-width="1" stroke-linejoin="round"/><path d="M1.200 3.300h6.200" stroke="#fff8dc" stroke-width="1"/><path d="M9.800 2h2.800" stroke="#8fb8e8" stroke-width="1"/></svg>
<div class="a" style="top:393px;font-size:12px;line-height:14px;color:#000;letter-spacing:-0.108px;left:71.40px;">Endpoints</div>
<svg class="a" style="left:50.8px;top:411.0px;" width="15" height="13" viewBox="0 0 15 13"><path d="M0.500 2.500v10h13.500v-11.500h-5.400l-1.200 1.500z" fill="url(#fg)" stroke="#cfa84c" stroke-width="1" stroke-linejoin="round"/><path d="M1.200 3.300h6.200" stroke="#fff8dc" stroke-width="1"/><path d="M9.800 2h2.800" stroke="#8fb8e8" stroke-width="1"/></svg>
<div class="a" style="top:411px;font-size:12px;line-height:14px;color:#000;letter-spacing:-0.211px;left:71.40px;">Scope Descriptions</div>
<svg class="a" style="left:50.8px;top:429.0px;" width="15" height="13" viewBox="0 0 15 13"><path d="M0.500 2.500v10h13.500v-11.500h-5.400l-1.200 1.500z" fill="url(#fg)" stroke="#cfa84c" stroke-width="1" stroke-linejoin="round"/><path d="M1.200 3.300h6.200" stroke="#fff8dc" stroke-width="1"/><path d="M9.800 2h2.800" stroke="#8fb8e8" stroke-width="1"/></svg>
<div class="a" style="top:429px;font-size:12px;line-height:14px;color:#000;letter-spacing:-0.016px;left:71.40px;">Web Application Proxy</div>
<svg class="a" style="left:31.8px;top:447.0px;" width="15" height="13" viewBox="0 0 15 13"><path d="M0.500 2.500v10h13.500v-11.500h-5.400l-1.200 1.500z" fill="url(#fg)" stroke="#cfa84c" stroke-width="1" stroke-linejoin="round"/><path d="M1.200 3.300h6.200" stroke="#fff8dc" stroke-width="1"/><path d="M9.800 2h2.800" stroke="#8fb8e8" stroke-width="1"/></svg>
<div class="a" style="top:447px;font-size:12px;line-height:14px;color:#000;letter-spacing:-0.174px;left:52.40px;">Access Control Policies</div>
<div class="a" style="left:29px;top:463px;width:130px;height:18px;background:#d9d9d9;"></div>
<svg class="a" style="left:31.8px;top:465.0px;" width="15" height="13" viewBox="0 0 15 13"><path d="M0.500 2.500v10h13.500v-11.500h-5.400l-1.200 1.500z" fill="url(#fg)" stroke="#cfa84c" stroke-width="1" stroke-linejoin="round"/><path d="M1.200 3.300h6.200" stroke="#fff8dc" stroke-width="1"/><path d="M9.800 2h2.800" stroke="#8fb8e8" stroke-width="1"/></svg>
<div class="a" style="top:465px;font-size:12px;line-height:14px;color:#000;letter-spacing:-0.244px;left:52.40px;">Relying Party Trusts</div>
<svg class="a" style="left:31.8px;top:483.0px;" width="15" height="13" viewBox="0 0 15 13"><path d="M0.500 2.500v10h13.500v-11.500h-5.400l-1.200 1.500z" fill="url(#fg)" stroke="#cfa84c" stroke-width="1" stroke-linejoin="round"/><path d="M1.200 3.300h6.200" stroke="#fff8dc" stroke-width="1"/><path d="M9.800 2h2.800" stroke="#8fb8e8" stroke-width="1"/></svg>
<div class="a" style="top:483px;font-size:12px;line-height:14px;color:#000;letter-spacing:-0.196px;left:52.40px;">Claims Provider Trusts</div>
<svg class="a" style="left:31.8px;top:501.0px;" width="15" height="13" viewBox="0 0 15 13"><path d="M0.500 2.500v10h13.500v-11.500h-5.400l-1.200 1.500z" fill="url(#fg)" stroke="#cfa84c" stroke-width="1" stroke-linejoin="round"/><path d="M1.200 3.300h6.200" stroke="#fff8dc" stroke-width="1"/><path d="M9.800 2h2.800" stroke="#8fb8e8" stroke-width="1"/></svg>
<div class="a" style="top:501px;font-size:12px;line-height:14px;color:#000;left:52.40px;">Application Groups</div>
<svg class="a" style="left:39px;top:469.5px;" width="8" height="11" viewBox="0 0 8 11"><path d="M1 1.200c0 2.400 1.400 3.200 3 4.300C5.600 4.400 7 3.600 7 1.200zM1 9.800c0-2.400 1.400-3.200 3-4.300 1.600 1.100 3 1.900 3 4.300z" fill="#eaf4ff" stroke="#3f7fd0" stroke-width="0.900"/><path d="M0.200 0.700h7.600M0.200 10.300h7.600" stroke="#a8541c" stroke-width="1.300"/></svg>
<div class="a" style="left:266px;top:263px;width:1px;height:688px;background:#fff;"></div>
<div class="a" style="left:268px;top:263px;width:620px;height:687px;background:#fff;border-left:2px solid #696969;border-bottom:1px solid #696969;border-right:1px solid #696969;"></div>
<div class="a" style="left:268px;top:263px;width:621px;height:23px;background:#696969;"></div>
<div class="a" style="top:268px;font-size:12px;line-height:14px;color:#fff;font-weight:700;left:275.50px;transform:scaleX(0.9350);transform-origin:0 50%;">Relying Party Trusts</div>
<div class="a" style="left:272px;top:932px;width:614px;height:16px;background:#f0f0f0;"></div>
<div class="a" style="left:289px;top:932px;width:475px;height:16px;background:#cdcdcd;"></div>
<svg class="a" style="left:276.5px;top:935.5px;" width="7" height="8" viewBox="0 0 7 8"><path d="M5.800 0.600L2 4l3.800 3.400" stroke="#484848" stroke-width="2" fill="none"/></svg>
<svg class="a" style="left:874.5px;top:935.5px;" width="7" height="8" viewBox="0 0 7 8"><path d="M1.200 0.600L5 4 1.200 7.400" stroke="#484848" stroke-width="2" fill="none"/></svg>
<div class="a" style="left:893px;top:263px;width:332px;height:687px;background:#fff;border-left:2px solid #696969;border-top:2px solid #696969;"></div>
<div class="a" style="left:1225px;top:263px;width:2px;height:688px;background:#f7f7f7;"></div>
<div class="a" style="left:895px;top:265px;width:330px;height:21px;background:#f0f0f0;"></div>
<div class="a" style="left:895px;top:285px;width:330px;height:1px;background:#909090;"></div>
<div class="a" style="top:269px;font-size:12px;line-height:14px;color:#000;font-weight:700;left:900.20px;transform:scaleX(0.9247);transform-origin:0 50%;">Actions</div>
<div class="a" style="left:896px;top:287px;width:329px;height:25px;background:linear-gradient(#bad2ea,#a9c4e2 45%,#9db9d9);"></div>
<div class="a" style="top:293px;font-size:12px;line-height:14px;color:#000;right:294.40px;transform:scaleX(0.8900);transform-origin:100% 50%;">Relying Party Trusts</div>
<svg class="a" style="left:1209px;top:297px;" width="9" height="5" viewBox="0 0 9 5"><path d="M0 5L4.500 0 9 5z" fill="#000"/></svg>
<div class="a" style="top:317px;font-size:12px;line-height:14px;color:#6d6d6d;right:241.60px;transform:scaleX(0.9450);transform-origin:100% 50%;">Add Relying Party Trust...</div>
<div class="a" style="left:975px;top:336px;width:245px;height:1px;background:#eaeaea;"></div>
<svg class="a" style="left:1212px;top:344px;" width="5" height="9" viewBox="0 0 5 9"><path d="M0 0l5 4.500L0 9z" fill="#000"/></svg>
<div class="a" style="top:366px;font-size:12px;line-height:14px;color:#000;right:244.80px;">New Window from Here</div>
<div class="a" style="left:975px;top:385px;width:245px;height:1px;background:#eaeaea;"></div>
<div class="a" style="left:975px;top:410px;width:245px;height:1px;background:#eaeaea;"></div>
<div class="a" style="left:896px;top:440px;width:329px;height:25px;background:linear-gradient(#bad2ea,#a9c4e2 45%,#9db9d9);"></div>
<div class="a" style="top:446px;font-size:12px;line-height:14px;color:#000;right:138.10px;transform:scaleX(0.9890);transform-origin:100% 50%;">Microsoft Office 365 Identity Platform Worldwide</div>
<svg class="a" style="left:1209px;top:450.5px;" width="9" height="5" viewBox="0 0 9 5"><path d="M0 5L4.500 0 9 5z" fill="#000"/></svg>
<div class="a" style="top:470px;font-size:12px;line-height:14px;color:#000;right:185.50px;transform:scaleX(0.9840);transform-origin:100% 50%;">Update from Federation Metadata...</div>
<div class="a" style="top:494px;font-size:12px;line-height:14px;color:#000;right:227.30px;transform:scaleX(0.9800);transform-origin:100% 50%;">Edit Access Control Policy...</div>
<div class="a" style="top:518px;font-size:12px;line-height:14px;color:#000;right:227.30px;transform:scaleX(0.9450);transform-origin:100% 50%;">Edit Claim Issuance Policy...</div>
<div class="a" style="top:566px;font-size:12px;line-height:14px;color:#000;right:320.00px;">Properties</div>
<div class="a" style="left:975px;top:585px;width:245px;height:1px;background:#eaeaea;"></div>
<div class="a" style="left:975px;top:610px;width:245px;height:1px;background:#eaeaea;"></div>
<div class="a" style="left:265px;top:950px;width:962px;height:2px;background:#fff;"></div>
<div class="a" style="left:889px;top:950px;width:336px;height:1px;background:#dedede;"></div>
<div class="a" style="left:1225px;top:952px;width:2px;height:22px;background:#fafafa;"></div>
<div class="a" style="left:7px;top:952px;width:1220px;height:22px;background:#f0f0f0;"></div>
<div class="a" style="left:7px;top:974px;width:1220px;height:1px;background:#fff;"></div>
<div class="a" style="top:958px;font-size:12px;line-height:14px;color:#000;letter-spacing:-0.121px;left:9.00px;">Action:  In progress...</div>
<div class="a" style="left:1006px;top:953px;width:1px;height:21px;background:#d4d4d4;"></div>
<div class="a" style="left:1007px;top:953px;width:1px;height:21px;background:#fff;"></div>
<div class="a" style="left:1139px;top:953px;width:1px;height:21px;background:#d4d4d4;"></div>
<div class="a" style="left:1140px;top:953px;width:1px;height:21px;background:#fff;"></div>
<div class="a" style="left:259px;top:287px;width:716px;height:582px;background:#fff;border:1px solid #4c4c4c;"></div>
<svg class="a" style="left:267.7px;top:293.3px;" width="16.3" height="16.3" viewBox="0 0 17 17"><circle cx="5.800" cy="6.600" r="5.800" fill="#1a4fd0"/><path d="M2.200 2.400C3.600 1 5.600 0.600 7.600 1.200L9 3.600 6 6.400 2 5.200z" fill="#4aa8f0"/><path d="M0.300 5.400C0.600 3.400 2 1.800 3.800 1.400L7.200 2.800 8.600 1.800V7H4.200L5.600 5.600 2.400 4.400z" fill="#f7a800"/><path d="M2 3.600c.8-.4 1.800 0 2 .8.200.8-.6 1.200-1.400 1.200S1.600 4.400 2 3.600zM3.600 8.200c1.400-.6 3.400-.2 4 1.200.6 1.600-.2 3-1.600 3.400C4.800 12 3.600 10.200 3.600 8.200z" fill="#18d840"/><path d="M0.600 7.800C1.400 10 2.800 11.800 5 12.600L4 9.400 2.200 7.200z" fill="#0a10a8"/><rect x="9.500" y="4.400" width="7" height="10" fill="#1a78d8"/><rect x="6.700" y="6.800" width="6.900" height="9.700" fill="#1a80e0"/><g fill="#bfeeff"><rect x="10.600" y="5.400" width="2.400" height="0.900"/><rect x="13.800" y="5.600" width="1.800" height="1"/><rect x="14" y="7.800" width="1.600" height="2.200"/><rect x="13.800" y="11" width="1.800" height="1.400"/><rect x="7.600" y="8" width="1.800" height="1"/><rect x="10.400" y="8" width="1.800" height="1"/><rect x="7.600" y="10.200" width="1.600" height="2"/><rect x="10.600" y="10.200" width="1.400" height="2"/><rect x="7.800" y="13.400" width="1.400" height="3"/><rect x="9.800" y="13.800" width="2.800" height="1"/></g><rect x="10.600" y="14.800" width="2.600" height="1.700" fill="#0020a0"/><rect x="14.200" y="12.800" width="2.200" height="1.600" fill="#0020a0"/></svg>
<div class="a" style="top:296px;font-size:12px;line-height:14px;color:#000;letter-spacing:-0.184px;left:289.50px;">Add Relying Party Trust Wizard</div>
<svg class="a" style="left:954px;top:297px;" width="10" height="10" viewBox="0 0 10 10"><path d="M0 0l10 10M10 0L0 10" stroke="#000" stroke-width="1.100" fill="none"/></svg>
<div class="a" style="top:331px;font-size:14px;line-height:16px;color:#000;font-weight:700;left:263.20px;transform:scaleX(1.1045);transform-origin:0 50%;">Select Data Source</div>
<div class="a" style="left:260px;top:357px;width:714px;height:1px;background:#e3e3e3;"></div>
<div class="a" style="left:261px;top:360px;width:164px;height:508px;background:#fff;border-right:1px solid #ececec;"></div>
<div class="a" style="left:261px;top:360px;width:163px;height:23px;background:linear-gradient(#fdfdfd,#ececec);"></div>
<div class="a" style="top:366px;font-size:11px;line-height:12px;color:#000;font-weight:700;letter-spacing:0.246px;left:263.60px;">Steps</div>
<div class="a" style="left:261px;top:408px;width:162px;height:23px;background:#ededed;"></div>
<div class="a" style="left:264px;top:391.8px;width:8px;height:8px;border-radius:50%;background:radial-gradient(circle at 40% 35%,#b8ee9a,#4fb82a 65%);border:1px solid #3a9a1a"></div>
<div class="a" style="top:388px;font-size:12px;line-height:14px;color:#1a1aff;left:279.40px;transform:scaleX(0.8756);transform-origin:0 50%;">Welcome</div>
<div class="a" style="left:264px;top:414.9px;width:8px;height:8px;border-radius:50%;background:radial-gradient(circle at 40% 35%,#b8ee9a,#4fb82a 65%);border:1px solid #3a9a1a"></div>
<div class="a" style="top:411px;font-size:12px;line-height:14px;color:#000;left:279.40px;transform:scaleX(0.8869);transform-origin:0 50%;">Select Data Source</div>
<div class="a" style="left:264px;top:437.9px;width:8px;height:8px;border-radius:50%;background:radial-gradient(circle at 40% 35%,#a9d1ff,#2f86f2 65%);border:1px solid #1f6fd8"></div>
<div class="a" style="top:434px;font-size:12px;line-height:14px;color:#000;left:278.60px;transform:scaleX(0.8803);transform-origin:0 50%;">Choose Access Control</div>
<div class="a" style="top:447px;font-size:12px;line-height:14px;color:#000;left:279.40px;transform:scaleX(0.8277);transform-origin:0 50%;">Policy</div>
<div class="a" style="left:264px;top:473.9px;width:8px;height:8px;border-radius:50%;background:radial-gradient(circle at 40% 35%,#a9d1ff,#2f86f2 65%);border:1px solid #1f6fd8"></div>
<div class="a" style="top:470px;font-size:12px;line-height:14px;color:#000;left:279.40px;transform:scaleX(0.8887);transform-origin:0 50%;">Ready to Add Trust</div>
<div class="a" style="left:264px;top:496.6px;width:8px;height:8px;border-radius:50%;background:radial-gradient(circle at 40% 35%,#a9d1ff,#2f86f2 65%);border:1px solid #1f6fd8"></div>
<div class="a" style="top:493px;font-size:12px;line-height:14px;color:#000;left:279.40px;transform:scaleX(0.8027);transform-origin:0 50%;">Finish</div>
<div class="a" style="left:427px;top:360px;width:547px;height:508px;background:#f0f0f0;"></div>
<div class="a" style="top:372px;font-size:12px;line-height:14px;color:#000;left:442.20px;transform:scaleX(0.8790);transform-origin:0 50%;">Select an option that this wizard will use to obtain data about this relying party:</div>
<div class="a" style="left:439px;top:399.0px;width:13px;height:13px;border-radius:50%;background:#fff;border:1.200px solid #333"></div>
<div class="a" style="left:442px;top:402.0px;width:7px;height:7px;border-radius:50%;background:#333"></div>
<div class="a" style="top:399px;font-size:12px;line-height:14px;color:#000;left:458.40px;transform:scaleX(0.8777);transform-origin:0 50%;">Import data about the relying party published online or on a local network</div>
<div class="a" style="top:420px;font-size:12px;line-height:14px;color:#000;left:457.80px;transform:scaleX(0.8744);transform-origin:0 50%;">Use this option to import the necessary data and certificates from a relying party organization that publishes</div>
<div class="a" style="top:433px;font-size:12px;line-height:14px;color:#000;left:456.70px;transform:scaleX(0.8813);transform-origin:0 50%;">its federation metadata online or on a local network.</div>
<div class="a" style="top:458px;font-size:12px;line-height:14px;color:#000;left:469.60px;transform:scaleX(0.8690);transform-origin:0 50%;">Federation metadata address (host name or URL):</div>
<div class="a" style="left:466px;top:477px;width:496px;height:20px;background:#fff;border:1px solid #0078d7;"></div>
<div class="a" style="top:480px;font-size:12px;line-height:14px;color:#000;left:468.80px;transform:scaleX(0.9044);transform-origin:0 50%;">https://ADFSDemo.frontline.cloud/saml2/metadata</div>
<div class="a" style="left:630px;top:481px;width:1px;height:12px;background:#000;"></div>
<div class="a" style="top:503px;font-size:12px;line-height:14px;color:#000;left:469.60px;transform:scaleX(0.9048);transform-origin:0 50%;">Example: fs.contoso.com or https://www.contoso.com/app</div>
<div class="a" style="left:439px;top:530.0px;width:13px;height:13px;border-radius:50%;background:#fff;border:1.200px solid #333"></div>
<div class="a" style="top:530px;font-size:12px;line-height:14px;color:#000;left:458.40px;transform:scaleX(0.8668);transform-origin:0 50%;">Import data about the relying party from a file</div>
<div class="a" style="top:551px;font-size:12px;line-height:14px;color:#000;left:457.80px;transform:scaleX(0.8752);transform-origin:0 50%;">Use this option to import the necessary data and certificates from a relying party organization that has</div>
<div class="a" style="top:564px;font-size:12px;line-height:14px;color:#000;left:456.70px;transform:scaleX(0.8747);transform-origin:0 50%;">exported its federation metadata to a file. Ensure that this file is from a trusted source.  This wizard will not</div>
<div class="a" style="top:577px;font-size:12px;line-height:14px;color:#000;left:456.70px;transform:scaleX(0.8879);transform-origin:0 50%;">validate the source of the file.</div>
<div class="a" style="top:602px;font-size:12px;line-height:14px;color:#000;left:469.60px;transform:scaleX(0.8723);transform-origin:0 50%;">Federation metadata file location:</div>
<div class="a" style="left:465px;top:618px;width:411px;height:21px;background:#fff;"></div>
<div class="a" style="left:466px;top:619px;width:409px;height:19px;background:#f0f0f0;border:1px solid #c3c3c3;"></div>
<div class="a" style="left:888px;top:619px;width:74px;height:21px;background:#cccccc;border:1px solid #bfbfbf;"></div>
<div class="a" style="top:623px;font-size:12px;line-height:14px;color:#838383;left:902.40px;transform:scaleX(0.8657);transform-origin:0 50%;">Browse...</div>
<div class="a" style="left:439px;top:655.0px;width:13px;height:13px;border-radius:50%;background:#fff;border:1.200px solid #333"></div>
<div class="a" style="top:655px;font-size:12px;line-height:14px;color:#000;left:458.40px;transform:scaleX(0.8697);transform-origin:0 50%;">Enter data about the relying party manually</div>
<div class="a" style="top:676px;font-size:12px;line-height:14px;color:#000;left:457.80px;transform:scaleX(0.8737);transform-origin:0 50%;">Use this option to manually input the necessary data about this relying party organization.</div>
<div class="a" style="left:427px;top:829px;width:547px;height:1px;background:#fff;"></div>
<div class="a" style="left:723px;top:837px;width:73px;height:21px;background:#e1e1e1;border:1px solid #adadad;"></div>
<div class="a" style="top:841px;font-size:12px;line-height:14px;color:#000;left:733.80px;transform:scaleX(0.8697);transform-origin:0 50%;">&lt; Previous</div>
<div class="a" style="left:804px;top:837px;width:73px;height:21px;background:#e1e1e1;border:2px solid #0078d7;"></div>
<div class="a" style="top:841px;font-size:12px;line-height:14px;color:#000;left:825.40px;transform:scaleX(0.8796);transform-origin:0 50%;">Next &gt;</div>
<div class="a" style="left:885px;top:837px;width:73px;height:21px;background:#e1e1e1;border:1px solid #adadad;"></div>
<div class="a" style="top:841px;font-size:12px;line-height:14px;color:#000;left:904.50px;transform:scaleX(0.8833);transform-origin:0 50%;">Cancel</div>
<svg class="a" style="left:8px;top:989.5px;" width="16" height="16" viewBox="0 0 16 16"><path d="M0 2.300l6.500-.9v6.200H0zM7.300 1.300L16 0v7.600H7.300zM0 8.400h6.500v6.200L0 13.700zM7.300 8.400H16V16l-8.700-1.300z" fill="#fff"/></svg>
<svg class="a" style="left:44px;top:989.5px;" width="16" height="16" viewBox="0 0 16 16"><circle cx="10" cy="6" r="5.200" stroke="#fff" stroke-width="1.400" fill="none"/><path d="M6.400 9.800L0.600 15.600" stroke="#fff" stroke-width="1.600"/></svg>
<svg class="a" style="left:79px;top:990px;" width="17" height="15" viewBox="0 0 17 15"><path d="M1.500 0v2.500h10V0M1.500 15v-2.500h10V15" stroke="#fff" stroke-width="1" fill="none"/><rect x="1.500" y="4.500" width="10" height="6" stroke="#fff" stroke-width="1" fill="none"/><path d="M15.500 0v15" stroke="#fff" stroke-width="1"/><rect x="14" y="4.200" width="3" height="2.600" fill="#fff"/></svg>
<svg class="a" style="left:118.5px;top:990px;" width="17" height="15" viewBox="0 0 17 15"><path d="M0.500 1.200h5.800l1.400 1.800h8.800v11.400h-16z" fill="#fce8a0" stroke="#f3d06c" stroke-width="0.800"/><path d="M0.900 1.600h5.200l1 1.300H0.900z" fill="#f5c84c"/><rect x="1.600" y="2" width="3.400" height="0.900" fill="#fff"/><path d="M3.300 14.600V9.400c0-.8.600-1.400 1.400-1.400h7.600c.8 0 1.400.6 1.400 1.400v5.200h-3.200v-4h-4v4z" fill="#2fa8e8"/></svg>
<svg class="a" style="left:156px;top:991.5px;" width="17" height="13" viewBox="0 0 17 13"><rect x="0.500" y="0.500" width="15.600" height="12" fill="#9cd5f8" stroke="#2a7fd0" stroke-width="1.200"/><circle cx="5" cy="5.400" r="2.800" fill="#2a7fd0"/><path d="M5 5.400V2.600a2.800 2.800 0 0 1 2.800 2.800z" fill="#f7a325"/><circle cx="5" cy="5.400" r="1.100" fill="#9cd5f8"/><rect x="9.800" y="3" width="4.400" height="1.600" fill="#fff"/><rect x="12.200" y="3" width="2" height="1.600" fill="#f7a325"/><rect x="9.800" y="5.800" width="4.400" height="1.600" fill="#fff"/><rect x="2" y="9.800" width="5" height="1" fill="#f7a325"/><rect x="7.400" y="9.800" width="1.600" height="1" fill="#fff"/><rect x="9.400" y="9.800" width="4.800" height="1" fill="#2a7fd0"/></svg>
<svg class="a" style="left:192.5px;top:992px;" width="17" height="12" viewBox="0 0 17 12"><defs><linearGradient id="psg" x1="0" y1="0" x2="1" y2="1"><stop offset="0" stop-color="#5b8ae6"/><stop offset="1" stop-color="#2f62c8"/></linearGradient></defs><path d="M3.200 0h13.400l-3.200 12H0z" fill="url(#psg)"/><path d="M4.400 2.400l4.800 3.600-5.600 3.600" stroke="#fff" stroke-width="1.500" fill="none"/><path d="M8.600 9.800h4" stroke="#fff" stroke-width="1.400"/></svg>
<svg class="a" style="left:229.5px;top:989.5px;" width="17" height="16" viewBox="0 0 17 16"><path d="M3 0h13.800l-2.400 10.400H0.600z" fill="#1f9fc4"/><path d="M5 2.400l3.800 2.800-4.400 2.800" stroke="#fff" stroke-width="1.300" fill="none"/><path d="M8.400 7.800h3.400" stroke="#fff" stroke-width="1.200"/><path d="M0.400 11h14l-.6 4.600H0z" fill="#8a8f94"/><path d="M2 13.200h6M10 13.200h2.400" stroke="#2a2a2a" stroke-width="1"/></svg>
<svg class="a" style="left:266.5px;top:993px;" width="17" height="11" viewBox="0 0 17 11"><path d="M2.400 0h14l-2.400 11H0.400z" fill="#2b9be6"/><rect x="4.600" y="2.200" width="8.400" height="6.400" fill="none" stroke="#fff" stroke-width="1.500"/><rect x="7" y="4.400" width="3.600" height="2" fill="#dff1ff"/><path d="M0 2.600h2.600M0 5.400h2M0 8.200h1.600" stroke="#000" stroke-width="1"/></svg>
<svg class="a" style="left:303.5px;top:989.5px;" width="17" height="16" viewBox="0 0 17 16"><rect x="5.600" y="0.500" width="10.600" height="8.600" fill="#c8c8c8" stroke="#8a8a8a"/><rect x="6.800" y="1.700" width="8.200" height="6.200" fill="#2a3fd0"/><rect x="0.600" y="3.400" width="7.400" height="5.600" fill="#b0b0b0" stroke="#7a7a7a"/><rect x="1.600" y="4.400" width="5.400" height="3.600" fill="#3a9a5a"/><rect x="2" y="10.400" width="13.600" height="5" fill="#9a9a9a"/><path d="M3 12h11.600M3 14h11.600" stroke="#e8e8e8" stroke-width="0.900" stroke-dasharray="1.200 0.800"/></svg>
<svg class="a" style="left:340.5px;top:990px;" width="17" height="16" viewBox="0 0 17 16"><rect x="0.700" y="0.700" width="8.200" height="14.200" rx="1" fill="#2b7fd4" stroke="#fff" stroke-width="1.200"/><path d="M2 4h5.600M2 7h5.600" stroke="#fff" stroke-width="1"/><rect x="4.400" y="8.600" width="12" height="6.800" rx="1" fill="#6a87a8" stroke="#fff" stroke-width="1.200"/><path d="M8 8.600V6.800h4.800v1.800" stroke="#fff" stroke-width="1.200" fill="none"/><path d="M4.400 11.400h12" stroke="#fff" stroke-width="1"/></svg>
<svg class="a" style="left:380px;top:990px;" width="13" height="16" viewBox="0 0 13 16"><circle cx="6.500" cy="3.200" r="3" fill="#2b8fe0"/><path d="M4.400 2.400c.8-.8 2-.8 2.600-.2.400.6-.2 1.400-1 1.600-.6.400-.4 1.200-1 1.400-.8-.4-1.200-1.600-.6-2.800z" fill="#6cc24a"/><path d="M6.500 6.200v2.600M2.400 11V9.600h8.200V11" stroke="#d0d0d0" stroke-width="1" fill="none"/><rect x="4.400" y="7.600" width="4.200" height="3" fill="#c8c8c8"/><rect x="0.400" y="11.400" width="4.200" height="4" fill="#c8c8c8"/><rect x="5" y="11.400" width="3.400" height="4" fill="#c8c8c8"/><rect x="8.800" y="11.400" width="4" height="4" fill="#c8c8c8"/><path d="M0.400 13.400h12.400" stroke="#777" stroke-width="0.800"/></svg>
<svg class="a" style="left:417px;top:990.5px;" width="13" height="15" viewBox="0 0 13 15"><rect x="0.500" y="0.500" width="12" height="14" fill="#e8c95a" stroke="#b89a34"/><rect x="2.600" y="3" width="7.800" height="3.800" fill="#fff3b8"/><path d="M0.500 10h12" stroke="#c8a844" stroke-width="1"/></svg>
<svg class="a" style="left:451.5px;top:989.5px;" width="17" height="16" viewBox="0 0 17 16"><circle cx="6" cy="6" r="5.600" fill="#2b8fe0"/><path d="M2 4c1.200-1.800 3.200-2.400 5-1.600 1 .6.400 1.800-.8 2.200-1.200.4-1.400 1.600-.6 2.800.4 1 0 2-1 2.200C2.400 8.800 1.200 6.400 2 4z" fill="#6cc24a"/><path d="M4 1.200c1.200-.2 2.600 0 3.600.8-.6.600-1.600.8-2.400.4z" fill="#f5d33b"/><rect x="9" y="5" width="7.400" height="10.600" fill="#c8ccd0" stroke="#7a7f84"/><path d="M10.200 7h5M10.200 9h5M10.200 11h5" stroke="#6a6f74" stroke-width="0.900"/><rect x="11.600" y="12.800" width="2" height="1.400" fill="#3fae3f"/></svg>
<svg class="a" style="left:490.5px;top:990px;" width="13" height="16" viewBox="0 0 13 16"><path d="M0.500 0.500h8l3.500 3.500v11.500h-11.500z" fill="#f6f6f6" stroke="#cfcfcf" stroke-width="0.800"/><path d="M8.500 0.500v3.500h3.500z" fill="#c4c4c4"/></svg>
<svg class="a" style="left:525.5px;top:989.5px;" width="18" height="16" viewBox="0 0 18 16"><defs><linearGradient id="eg1" x1="0" y1="0.300" x2="1" y2="0.200"><stop offset="0" stop-color="#1b8fe0"/><stop offset="0.550" stop-color="#35c1c4"/><stop offset="1" stop-color="#5fd85a"/></linearGradient></defs><path d="M8.600 0.300c4.400 0 8 3.200 8 7.200 0 2-1.200 3.600-3.200 4.200H3.400C1.600 10.400 0.600 8.600 0.600 6.800 1 3 4.400 0.300 8.600 0.300z" fill="url(#eg1)"/><path d="M1.600 8.400c.2-2.400 2.200-4 4.600-4 1.600 0 2.800.8 3.200 2-1.600-.4-3 .6-3 2.200 0 1.400 1 2.600 2.600 3.100H3.400C2.400 10.800 1.700 9.700 1.600 8.400z" fill="#0f5fb8"/><path d="M6.800 7.200c1-.8 2.400-.4 2.800.6.300.9-.2 1.700-.6 2.200.1.800 1 1.400 2.200 1.500H8.400C6.800 10.800 6 9 6.800 7.200z" fill="#08152a"/><rect x="2.200" y="11.600" width="14" height="4.600" fill="#35c8f0"/></svg>
<div class="a" style="left:528.500px;top:1001.500px;font-size:4.600px;line-height:5px;color:#06283d;font-weight:700;letter-spacing:0.500px">BETA</div>
<div class="a" style="left:553px;top:983px;width:36px;height:26px;background:#333;"></div>
<svg class="a" style="left:564.5px;top:990px;" width="13" height="16" viewBox="0 0 13 16"><path d="M0.500 0.500h8l3.500 3.500v11.500h-11.500z" fill="#f6f6f6" stroke="#cfcfcf" stroke-width="0.800"/><path d="M8.500 0.500v3.500h3.500z" fill="#c4c4c4"/></svg>
<svg class="a" style="left:600px;top:990px;" width="17" height="16" viewBox="0 0 17 16"><path d="M8.500 0L17 8l-8.500 8L0 8z" fill="#1fb0f0"/><path d="M8.500 4l4 4-4 4-4-4z" fill="none" stroke="#fff" stroke-width="1.200"/><circle cx="8.500" cy="2.600" r="1" fill="#fff"/><circle cx="8.500" cy="13.400" r="1" fill="#fff"/><circle cx="2.800" cy="8" r="1" fill="#fff"/><circle cx="14.200" cy="8" r="1" fill="#fff"/></svg>
<svg class="a" style="left:1118px;top:990.5px;" width="13" height="16" viewBox="0 0 13 16"><rect x="2.200" y="0.500" width="5.600" height="4" stroke="#fff" stroke-width="1" fill="none"/><rect x="3.500" y="1.800" width="1" height="1.200" fill="#fff"/><rect x="5.500" y="1.800" width="1" height="1.200" fill="#fff"/><rect x="0.600" y="4.500" width="8.800" height="10.400" rx="1" stroke="#fff" stroke-width="1.100" fill="none"/><path d="M7 13l1.800 1.600 3.800-3.800" stroke="#fff" stroke-width="0.900" fill="none"/></svg>
<div class="a" style="left:1140px;top:991px;width:13px;height:12px;background:#767676;"></div>
<div class="a" style="left:1140.500px;top:991px;font-size:9.500px;line-height:10px;color:#fff;font-weight:700;letter-spacing:-0.500px">vm</div>
<svg class="a" style="left:1163px;top:992px;" width="17" height="13" viewBox="0 0 17 13"><rect x="4.500" y="0.500" width="11.500" height="8.500" stroke="#fff" stroke-width="1" fill="none"/><rect x="0.500" y="0.500" width="4" height="4" fill="#000" stroke="#fff" stroke-width="1"/><path d="M1.500 2l1 1 1.200-1.400" stroke="#fff" stroke-width="0.700" fill="none"/><path d="M2.500 4.500v8M2.500 12.500h9.500M9.500 9v3.500" stroke="#fff" stroke-width="1" fill="none"/></svg>
<div class="a" style="top:991px;font-size:12px;line-height:14px;color:#fff;left:1192.30px;transform:scaleX(0.9306);transform-origin:0 50%;">4:07 PM</div>
<svg class="a" style="left:1256px;top:990.5px;" width="16" height="15" viewBox="0 0 16 15"><path d="M0 0h16v11.600h-5l-3 3.200-3-3.200H0z" fill="#fff"/><path d="M3 3.200h10M3 5.600h10M3 8h6.500" stroke="#000" stroke-width="1"/></svg>
<div class="a" style="left:1292px;top:983px;width:1px;height:26px;background:#5a5a5a;"></div>
</body></html>
